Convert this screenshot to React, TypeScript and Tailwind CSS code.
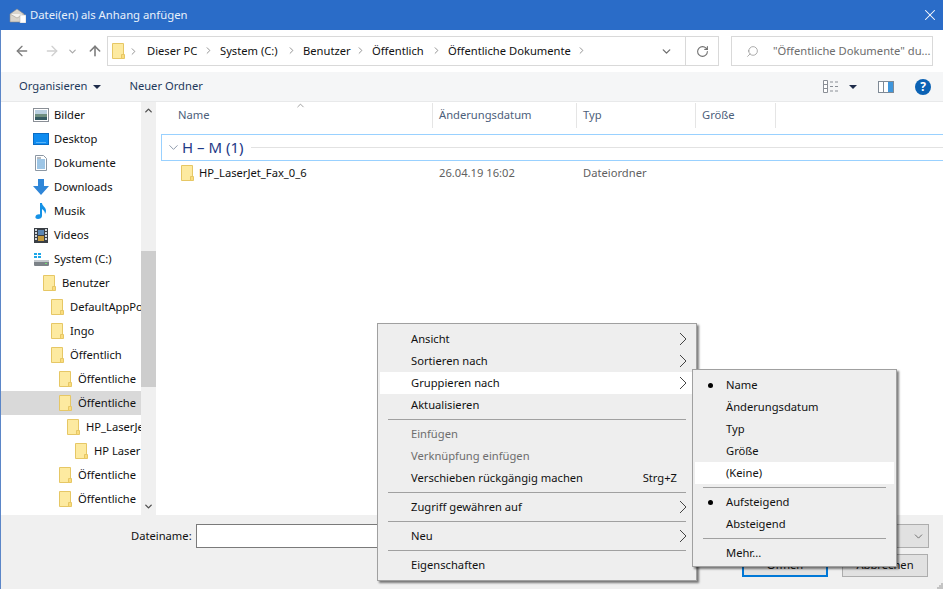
import { X, ArrowLeft, ArrowRight, ArrowUp, ChevronDown, ChevronUp, ChevronRight, RotateCw, Search } from "lucide-react";

const FONT = "font-['Noto_Sans',sans-serif]";

function Folder({ className = "" }: { className?: string }) {
  return (
    <svg viewBox="0 0 13 16" className={`h-4 w-[13px] shrink-0 ${className}`}>
      <path d="M.5.5h11v15H.5z" fill="#fdeaa0" stroke="#e6c765" />
      <path d="M9.500 11.500h3v4h-3z" fill="#fbdc7c" stroke="#e6c765" />
    </svg>
  );
}

function TreeIcon({ name }: { name: string }) {
  if (name === "Bilder")
    return (
      <svg viewBox="0 0 16 14" className="h-3.5 w-4">
        <rect x=".5" y=".5" width="15" height="13" fill="#fff" stroke="#8a8f96" />
        <rect x="2" y="2" width="12" height="4" fill="#b9cfe0" />
        <rect x="2" y="6" width="12" height="3" fill="#6f8f80" />
        <rect x="2" y="9" width="12" height="3" fill="#345a62" />
      </svg>
    );
  if (name === "Desktop")
    return (
      <svg viewBox="0 0 16 12" className="h-3 w-4">
        <rect width="16" height="12" fill="#0f8cf0" />
        <rect x=".5" y=".5" width="15" height="11" fill="none" stroke="#0a6cc4" />
        <rect x="3" y="9" width="10" height="1" fill="#5ab4f8" />
      </svg>
    );
  if (name === "Dokumente")
    return (
      <svg viewBox="0 0 12 16" className="h-4 w-3">
        <path d="M.5.5h8l3 3v12H.5z" fill="#fff" stroke="#8c97a3" />
        <path d="M2 5h8M2 7h8M2 9h8M2 11h8M2 13h8" stroke="#3d8ccc" />
        <path d="M2 3h4" stroke="#6a7682" />
      </svg>
    );
  if (name === "Downloads")
    return (
      <svg viewBox="0 0 16 16" className="h-4 w-4">
        <path d="M5 0h6v7h5l-8 9-8-9h5z" fill="#2f86d8" />
      </svg>
    );
  if (name === "Musik")
    return (
      <svg viewBox="0 0 12 16" className="h-4 w-3">
        <path d="M5 0h2c0 3 4 4 4 8 0 1-.4 2-1 3 0-3-2-4-3-5v7c0 2-2 3-4 3s-3-1-2.500-2.500S3 11 5 11.500z" fill="#1592e6" />
      </svg>
    );
  if (name === "Videos")
    return (
      <svg viewBox="0 0 14 15" className="h-[15px] w-3.5">
        <rect width="14" height="15" fill="#3a3f45" />
        <path d="M1 1h2v2H1zM1 4h2v2H1zM1 7h2v2H1zM1 10h2v2H1zM11 1h2v2h-2zM11 4h2v2h-2zM11 7h2v2h-2zM11 10h2v2h-2z" fill="#cfd6dc" />
        <rect x="4" y="2" width="6" height="5" fill="#5a86b4" />
        <rect x="4" y="8" width="6" height="5" fill="#c49a3c" />
      </svg>
    );
  return (
    <svg viewBox="0 0 16 15" className="h-[15px] w-4">
      <path d="M1 1h3v2H1zM5 1h3v2H5zM1 4h3v2H1zM5 4h3v2H5z" fill="#1ea7e8" />
      <rect x="1" y="9" width="15" height="5" rx="1" fill="#7c8288" />
      <rect x="1" y="8" width="15" height="2" fill="#c4c8cc" />
      <rect x="12" y="11" width="2" height="1" fill="#6fe06f" />
    </svg>
  );
}

const LIBRARIES = ["Bilder", "Desktop", "Dokumente", "Downloads", "Musik", "Videos", "System (C:)"];

const FOLDERS = [
  { name: "Benutzer", pad: "pl-[43px]" },
  { name: "DefaultAppPo", pad: "pl-[51px]" },
  { name: "Ingo", pad: "pl-[51px]" },
  { name: "Öffentlich", pad: "pl-[51px]" },
  { name: "Öffentliche", pad: "pl-[59px]" },
  { name: "Öffentliche", pad: "pl-[59px]", selected: true },
  { name: "HP_LaserJe", pad: "pl-[67px]" },
  { name: "HP Laser", pad: "pl-[75px]" },
  { name: "Öffentliche", pad: "pl-[59px]" },
  { name: "Öffentliche", pad: "pl-[59px]" },
];

const CRUMBS = [
  { label: "Dieser PC", w: "w-[73px]" },
  { label: "System (C:)", w: "w-[83px]" },
  { label: "Benutzer", w: "w-[69px]" },
  { label: "Öffentlich", w: "w-[76px]" },
  { label: "Öffentliche Dokumente", w: "w-[145px]" },
];

const COLUMNS = [
  { label: "Name", w: "w-[272px]", pad: "pl-[17px]" },
  { label: "Änderungsdatum", w: "w-[144px]", pad: "pl-[6px]" },
  { label: "Typ", w: "w-[119px]", pad: "pl-[6px]" },
  { label: "Größe", w: "w-[80px]", pad: "pl-[6px]" },
];

function MenuRow({ label, arrow, active, disabled, hint }: { label: string; arrow?: boolean; active?: boolean; disabled?: boolean; hint?: string }) {
  return (
    <div className={`relative flex h-[22px] items-center pl-[31px] pr-[7px] ${active ? "bg-white" : ""} ${disabled ? "text-[#6d6d6d]" : "text-[#111]"}`}>
      <span className="flex-1 whitespace-nowrap">{label}</span>
      {hint && <span className="mr-[10px]">{hint}</span>}
      {arrow && (
        <svg viewBox="0 0 8 14" className="h-3.5 w-2">
          <path d="M1 1l6 6-6 6" fill="none" stroke="#444" />
        </svg>
      )}
    </div>
  );
}

function Sep() {
  return <div className="mx-2 my-[3px] h-px bg-[#a0a0a0]" />;
}

function SubRow({ label, dot, active }: { label: string; dot?: boolean; active?: boolean }) {
  return (
    <div className={`flex h-[22px] items-center text-[#111] ${active ? "bg-white" : ""}`}>
      <span className="flex w-[31px] justify-center">{dot && <span className="h-[5px] w-[5px] rounded-full bg-black" />}</span>
      <span>{label}</span>
    </div>
  );
}

export default function App() {
  return (
    <div className={`${FONT} relative flex h-[589px] w-[943px] flex-col overflow-hidden bg-white text-[11.2px] text-[#111]`}>
      {/* title bar */}
      <div className="flex h-[30px] shrink-0 items-center bg-[#2a6cc8] pl-[9px] pr-[4px] text-[#e8f0fa]">
        <svg viewBox="0 0 17 15" className="h-[15px] w-[17px]">
          <path d="M1 6l7-5 7 5v8H1z" fill="#d8d4cc" stroke="#8a8a8a" strokeWidth=".6" />
          <path d="M1 6l7 4 7-4" fill="#f4f2ee" stroke="#a09a90" strokeWidth=".6" />
          <rect x="11" y="7" width="6" height="8" fill="#fff" stroke="#bbb" strokeWidth=".6" />
        </svg>
        <span className="ml-1 flex-1 text-[11.3px]">Datei(en) als Anhang anfügen</span>
        <X className="h-[18px] w-[18px] text-white" strokeWidth={1.400} />
      </div>

      <div className="flex min-h-0 flex-1 flex-col border-l border-[#5b86c8]">
        {/* address row */}
        <div className="flex h-[42px] shrink-0 items-center pl-[13px] pr-[10px]">
          <ArrowLeft className="h-4 w-4 text-[#7d7d7d]" strokeWidth={2} />
          <ArrowRight className="ml-[14px] h-4 w-4 text-[#d0d0d0]" strokeWidth={2} />
          <ChevronDown className="ml-[7px] h-[11px] w-[11px] text-[#a8a8a8]" strokeWidth={2.500} />
          <ArrowUp className="ml-[9px] h-4 w-4 text-[#7d7d7d]" strokeWidth={2.400} />
          <div className="ml-[4px] flex h-[30px] w-[612px] items-center border border-[#d9d9d9]">
            <Folder className="ml-[4px]" />
            <ChevronRight className="ml-[3px] mr-[3px] h-[11px] w-[11px] text-[#8a8a8a]" strokeWidth={2} />
            <div className="flex flex-1 items-center">
              {CRUMBS.map((c) => (
                <div key={c.label} className={`flex items-center ${c.w} shrink-0`}>
                  <span className="ml-[5px] flex-1 whitespace-nowrap">{c.label}</span>
                  <ChevronRight className="mr-[1px] h-[11px] w-[11px] text-[#8a8a8a]" strokeWidth={2} />
                </div>
              ))}
            </div>
            <ChevronDown className="mr-[12px] h-[13px] w-[13px] text-[#707070]" strokeWidth={2.500} />
            <div className="flex h-full w-[33px] items-center justify-center border-l border-[#d9d9d9]">
              <RotateCw className="h-[13px] w-[13px] text-[#707070]" strokeWidth={2} />
            </div>
          </div>
          <div className="ml-[12px] flex h-[30px] w-[202px] items-center overflow-hidden border border-[#d9d9d9] text-[#6d6d6d]">
            <Search className="ml-[14px] h-[13px] w-[13px] shrink-0 -scale-x-100 text-[#8a8a8a]" strokeWidth={1.300} />
            <span className="ml-[14px] whitespace-nowrap">"Öffentliche Dokumente" du...</span>
          </div>
        </div>

        {/* toolbar */}
        <div className="flex h-[30px] shrink-0 items-center border-b border-[#e8e9ea] bg-[#f5f6f7] pl-[18px] pr-[12px] text-[#1e395b]">
          <span>Organisieren</span>
          <span className="ml-[6px] h-0 w-0 border-x-[4px] border-t-[4px] border-x-transparent border-t-[#1e2c4a]" />
          <span className="ml-[28px] flex-1">Neuer Ordner</span>
          <svg viewBox="0 0 16 13" className="h-[13px] w-4">
            <path d="M.5.5h4v12h-4zM.5 4.500h4M.5 8.500h4" fill="#fff" stroke="#8a8f96" />
            <path d="M7 2h3M12 2h3M7 6.500h3M12 6.500h3M7 11h3M12 11h3" stroke="#8a8f96" />
          </svg>
          <span className="ml-[10px] h-0 w-0 border-x-[4px] border-t-[4px] border-x-transparent border-t-[#1e2c4a]" />
          <svg viewBox="0 0 16 12" className="ml-[21px] h-3 w-4">
            <rect x=".5" y=".5" width="15" height="11" fill="#fff" stroke="#7f8a96" />
            <rect x="10" y="1" width="5" height="10" fill="#3f96dc" />
            <path d="M5.500 1v10" stroke="#7f8a96" />
          </svg>
          <span className="ml-[21px] flex h-[16px] w-[16px] items-center justify-center rounded-full bg-[#0b62b4] text-[12px] font-bold text-white">?</span>
        </div>

        {/* main */}
        <div className="flex min-h-0 flex-1">
          <div className="flex w-[155px] shrink-0">
            <div className="w-[140px] shrink-0 overflow-hidden pt-px">
              {LIBRARIES.map((name) => (
                <div key={name} className="flex h-[24px] items-center whitespace-nowrap">
                  <span className="ml-[32px] flex w-[16px] justify-center"><TreeIcon name={name} /></span>
                  <span className="ml-[5px]">{name}</span>
                </div>
              ))}
              {FOLDERS.map((f, i) => (
                <div key={i} className={`flex h-[24px] items-center whitespace-nowrap ${f.pad} ${f.selected ? "bg-[#d9d9d9]" : ""}`}>
                  <Folder className="-ml-[1px]" />
                  <span className="ml-[6px]">{f.name}</span>
                </div>
              ))}
            </div>
            <div className="flex w-[15px] shrink-0 flex-col bg-[#f0f0f0]">
              <div className="flex h-[17px] items-center justify-center">
                <ChevronUp className="h-[11px] w-[11px] text-[#505050]" strokeWidth={3} />
              </div>
              <div className="mt-[132px] h-[136px] bg-[#cdcdcd]" />
              <div className="mt-auto flex h-[17px] items-center justify-center">
                <ChevronDown className="h-[11px] w-[11px] text-[#505050]" strokeWidth={3} />
              </div>
            </div>
          </div>

          <div className="relative min-w-0 flex-1 pl-[5px]">
            <div className="flex h-[26px] pt-px text-[#4c607a]">
              {COLUMNS.map((c) => (
                <div key={c.label} className={`flex items-center border-r border-[#e5e5e5] ${c.w} ${c.pad}`}>{c.label}</div>
              ))}
            </div>
            <ChevronUp className="absolute left-[139px] top-[-2px] h-[11px] w-[11px] text-[#777]" strokeWidth={1.500} />
            <div className="mt-[6px] flex h-[27px] items-center border border-r-0 border-[#99d1ff] pl-[4px] text-[#1e3a87]">
              <ChevronDown className="h-[15px] w-[15px] text-[#6a7a90]" strokeWidth={1.200} />
              <span className="ml-[1px] whitespace-nowrap text-[15px] leading-none">H – M (1)</span>
              <div className="ml-[7px] h-px flex-1 bg-[#e2e2e2]" />
            </div>
            <div className="mt-[1px] flex h-[22px] items-center whitespace-nowrap text-[#111]">
              <Folder className="ml-[20px]" />
              <span className="ml-[5px] w-[240px]">HP_LaserJet_Fax_0_6</span>
              <span className="w-[144px] text-[#5f5f5f]">26.04.19 16:02</span>
              <span className="text-[#5f5f5f]">Dateiordner</span>
            </div>
          </div>
        </div>

        {/* footer */}
        <div className="flex h-[74px] shrink-0 flex-col bg-[#f0f0f0]">
          <div className="mt-[9px] flex h-[24px] items-center pl-[130px]">
            <span className="w-[66px]">Dateiname:</span>
            <div className="h-full w-[560px] border border-[#7a7a7a] bg-white" />
            <div className="ml-auto mr-[14px] flex h-[24px] w-[180px] items-center justify-end border border-[#adadad] bg-[#e1e1e1] pr-[3px]">
              <ChevronDown className="h-[13px] w-[13px] text-[#505050]" strokeWidth={1.400} />
            </div>
          </div>
          <div className="mt-[6px] flex h-[23px] justify-end pr-[15px]">
            <div className="flex w-[86px] items-center justify-center border-2 border-[#0078d7] bg-[#e1e1e1]">Öffnen</div>
            <div className="ml-[14px] flex w-[86px] items-center justify-center border border-[#adadad] bg-[#e1e1e1]">Abbrechen</div>
          </div>
        </div>
      </div>

      {/* resize grip */}
      <svg viewBox="0 0 6 6" className="absolute bottom-0 right-0 h-1.5 w-1.5">
        <path d="M4 0h2v2H4zM2 2h2v2H2zM4 2h2v2H4zM0 4h2v2H0zM2 4h2v2H2zM4 4h2v2H4z" fill="#c4c4c4" />
      </svg>

      {/* context menu */}
      <div className="absolute left-[377px] top-[323px] w-[320px] border border-[#a0a0a0] bg-[#eeeeee] py-[4px] pl-[2px] pr-[2px] shadow-[2px_2px_2px_rgba(0,0,0,0.5)]">
        <MenuRow label="Ansicht" arrow />
        <MenuRow label="Sortieren nach" arrow />
        <MenuRow label="Gruppieren nach" arrow active />
        <MenuRow label="Aktualisieren" />
        <Sep />
        <MenuRow label="Einfügen" disabled />
        <MenuRow label="Verknüpfung einfügen" disabled />
        <MenuRow label="Verschieben rückgängig machen" hint="Strg+Z" />
        <Sep />
        <MenuRow label="Zugriff gewähren auf" arrow />
        <Sep />
        <MenuRow label="Neu" arrow />
        <Sep />
        <MenuRow label="Eigenschaften" />
      </div>

      {/* submenu */}
      <div className="absolute left-[692px] top-[369px] w-[205px] border border-[#a0a0a0] bg-[#eeeeee] p-[2px] pt-[4px] shadow-[2px_2px_2px_rgba(0,0,0,0.5)]">
        <SubRow label="Name" dot />
        <SubRow label="Änderungsdatum" />
        <SubRow label="Typ" />
        <SubRow label="Größe" />
        <SubRow label="(Keine)" active />
        <Sep />
        <SubRow label="Aufsteigend" dot />
        <SubRow label="Absteigend" />
        <Sep />
        <SubRow label="Mehr..." />
      </div>
    </div>
  );
}
